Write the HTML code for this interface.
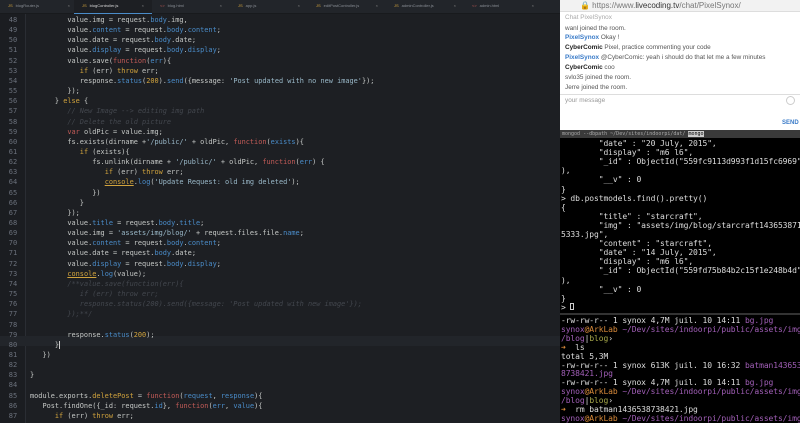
<!DOCTYPE html>
<html><head><meta charset="utf-8"><style>
*{margin:0;padding:0;box-sizing:border-box}
body{width:800px;height:423px;overflow:hidden;background:#1d1f23;position:relative;font-family:"DejaVu Sans Mono","Liberation Mono",monospace}
#tabs{position:absolute;left:0;top:0;width:560px;height:14px;background:#22252a;border-bottom:1px solid #181a1d;z-index:2}
.tab{position:absolute;top:0;height:14px;width:78px;font:4px "Liberation Sans",sans-serif;color:#8a8f96;line-height:12px;padding-left:8px}
.tab i{font-style:normal;color:#d1a33d;margin-right:3px}
.tab b{position:absolute;right:8px;top:0;color:#888;font-weight:normal}
#ed{position:absolute;left:0;top:14px;width:560px;height:409px;background:#1d1f23;overflow:hidden}
#gut{position:absolute;left:0;top:0;width:26px;height:409px;background:#1b1d21;border-right:1px solid #2a2d33}
.ln{position:absolute;left:0;width:26px;text-align:center;font-size:7px;color:#6b717c}
.cl{position:absolute;left:30px;font-size:6.9px;color:#c5c8c6;white-space:pre}
.p{color:#4a8cc9}.f{color:#c25b57}.k{color:#d1a33d}.s{color:#9ab9c9}.c{color:#43474e;font-style:italic}.n{color:#d1a33d}.u{text-decoration:underline;color:#d1a33d}
#br{position:absolute;left:560px;top:0;width:240px;height:130px;background:#fff;font-family:"Liberation Sans",sans-serif}
#addr{height:12px;background:#f2f2f2;border-bottom:1px solid #ddd;font-size:8px;color:#777;padding-left:20px;line-height:11px}
#br .m{position:absolute;left:5px;font-size:6.4px;color:#555;white-space:nowrap}
.bl{color:#3a7bc8;font-weight:bold}.bk{color:#222;font-weight:bold}
#tt{position:absolute;left:560px;top:130px;width:240px;height:8px;background:#3a3a3a;font-size:5px;color:#aaa;line-height:8px;padding-left:2px}
#t1{position:absolute;left:560px;top:138px;width:240px;height:175px;background:#000;overflow:hidden}
#t2{position:absolute;left:560px;top:313px;width:240px;height:110px;background:#000;border-top:2px solid #333;overflow:hidden}
.tl{position:absolute;left:1px;font-size:8px;color:#ddd;white-space:pre;letter-spacing:-0.1px}
.mg{color:#a25fb8}.or{color:#d88a3a}.ol{color:#a7a84a}
</style></head><body>
<div id="tabs">
<div class="tab" style="left:0"><i>JS</i>blogRouter.js<b>×</b></div>
<div class="tab" style="left:74px;background:#1d1f23;color:#ddd;border-bottom:1px solid #4a8cc9"><i>JS</i>blogController.js<b>×</b></div>
<div class="tab" style="left:152px"><i style="color:#c25b57">&lt;&gt;</i>blog.html<b>×</b></div>
<div class="tab" style="left:230px"><i>JS</i>app.js<b>×</b></div>
<div class="tab" style="left:308px"><i>JS</i>editPostController.js<b>×</b></div>
<div class="tab" style="left:386px"><i>JS</i>adminController.js<b>×</b></div>
<div class="tab" style="left:464px"><i style="color:#c25b57">&lt;&gt;</i>admin.html<b>×</b></div>
</div>
<div id="ed">
<div id="gut"></div>
<div style="position:absolute;left:0;top:322px;width:560px;height:10px;background:#22252a"></div>
<div id="code"></div>
</div>
<div id="br">
<div id="addr">🔒 https://www.<b style="color:#333;font-weight:normal">livecoding.tv</b>/chat/PixelSynox/</div>
<div class="m" style="top:14px;color:#aaa">Chat PixelSynox</div>
<div class="m" style="top:25px">wanl joined the room.</div>
<div class="m" style="top:34px"><span class="bl">PixelSynox</span> Okay !</div>
<div class="m" style="top:44px"><span class="bk">CyberComic</span> Pixel, practice commenting your code</div>
<div class="m" style="top:54px"><span class="bl">PixelSynox</span> @CyberComic: yeah i should do that let me a few minutes</div>
<div class="m" style="top:64px"><span class="bk">CyberComic</span> coo</div>
<div class="m" style="top:74px">svlo35 joined the room.</div>
<div class="m" style="top:84px">Jerre joined the room.</div>
<div style="position:absolute;left:0;top:94px;width:240px;border-top:1px solid #ddd"></div>
<div class="m" style="top:97px;color:#999">your message</div>
<div style="position:absolute;left:226px;top:96px;width:9px;height:9px;border:1px solid #ccc;border-radius:50%"></div>
<div class="m" style="left:222px;top:120px;color:#3a7bc8;font-weight:bold;font-size:6px">SEND</div>
</div>
<div id="tt">mongod --dbpath ~/Dev/sites/indoorpi/dat/ <span style="background:#ccc;color:#000">mongo</span></div>
<div id="t1"></div>
<div id="t2"></div>
<script>
const L=[
[48,'         value.img = request.<span class="p">body</span>.img,'],
[49,'         value.<span class="p">content</span> = request.<span class="p">body</span>.<span class="p">content</span>;'],
[50,'         value.date = request.<span class="p">body</span>.date;'],
[51,'         value.<span class="p">display</span> = request.<span class="p">body</span>.<span class="p">display</span>;'],
[52,'         value.save(<span class="f">function</span>(<span class="p">err</span>){'],
[53,'            <span class="k">if</span> (err) <span class="k">throw</span> err;'],
[54,'            response.<span class="p">status</span>(<span class="n">200</span>).<span class="p">send</span>({message: <span class="s">\'Post updated with no new image\'</span>});'],
[55,'         });'],
[56,'      } <span class="k">else</span> {'],
[57,'         <span class="c">// New Image --> editing img path</span>'],
[58,'         <span class="c">// Delete the old picture</span>'],
[59,'         <span class="f">var</span> oldPic = value.img;'],
[60,'         fs.exists(dirname +<span class="s">\'/public/\'</span> + oldPic, <span class="f">function</span>(<span class="p">exists</span>){'],
[61,'            <span class="k">if</span> (exists){'],
[62,'               fs.unlink(dirname + <span class="s">\'/public/\'</span> + oldPic, <span class="f">function</span>(<span class="p">err</span>) {'],
[63,'                  <span class="k">if</span> (err) <span class="k">throw</span> err;'],
[64,'                  <span class="u">console</span>.<span class="p">log</span>(<span class="s">\'Update Request: old img deleted\'</span>);'],
[65,'               })'],
[66,'            }'],
[67,'         });'],
[68,'         value.<span class="p">title</span> = request.<span class="p">body</span>.<span class="p">title</span>;'],
[69,'         value.img = <span class="s">\'assets/img/blog/\'</span> + request.files.file.<span class="p">name</span>;'],
[70,'         value.<span class="p">content</span> = request.<span class="p">body</span>.<span class="p">content</span>;'],
[71,'         value.date = request.<span class="p">body</span>.date;'],
[72,'         value.<span class="p">display</span> = request.<span class="p">body</span>.<span class="p">display</span>;'],
[73,'         <span class="u">console</span>.<span class="p">log</span>(value);'],
[74,'         <span class="c">/**value.save(function(err){</span>'],
[75,'            <span class="c">if (err) throw err;</span>'],
[76,'            <span class="c">response.status(200).send({message: \'Post updated with new image\'});</span>'],
[77,'         <span class="c">});**/</span>'],
[78,''],
[79,'         response.<span class="p">status</span>(<span class="n">200</span>);'],
[80,'      }<span style="border-left:1px solid #ccc"></span>'],
[81,'   })'],
[82,''],
[83,'}'],
[84,''],
[85,'module.exports.<span class="k">deletePost</span> = <span class="f">function</span>(<span class="p">request</span>, <span class="p">response</span>){'],
[86,'   Post.findOne({_id: request.<span class="p">id</span>}, <span class="f">function</span>(<span class="p">err</span>, <span class="p">value</span>){'],
[87,'      <span class="k">if</span> (err) <span class="k">throw</span> err;']];
let h='';
L.forEach((l,i)=>{const t=2+i*10.15;h+=`<div class="ln" style="top:${t}px">${l[0]}</div><div class="cl" style="top:${t}px">${l[1]}</div>`});
h+='<div class="cl" style="top:-8px;color:#777">         value.title = request.body.title;</div>';
document.getElementById('code').innerHTML=h;
const T1=['        "date" : "20 July, 2015",','        "display" : "m6 l6",','        "_id" : ObjectId("559fc9113d993f1d15fc6969"','),','        "__v" : 0','}','> db.postmodels.find().pretty()','{','        "title" : "starcraft",','        "img" : "assets/img/blog/starcraft143653871','5333.jpg",','        "content" : "starcraft",','        "date" : "14 July, 2015",','        "display" : "m6 l6",','        "_id" : ObjectId("559fd75b84b2c15f1e248b4d"','),','        "__v" : 0','}','> <span style="border:1px solid #ccc;display:inline-block;width:4px;height:7px"></span>'];
let s='';T1.forEach((l,i)=>{s+=`<div class="tl" style="top:${1+i*9.1}px">${l}</div>`});
document.getElementById('t1').innerHTML=s;
const P='<span class="mg">synox</span><span class="or">@ArkLab</span> <span class="mg">~/Dev/sites/indoorpi/public/assets/img</span>';
const T2=['-rw-rw-r-- 1 synox 4,7M juil. 10 14:11 <span class="mg">bg.jpg</span>',P,'<span class="mg">/blog</span>|<span class="ol">blog</span>›','<span class="or">➜</span>  ls','total 5,3M','-rw-rw-r-- 1 synox 613K juil. 10 16:32 <span class="mg">batman143653</span>','<span class="mg">8738421.jpg</span>','-rw-rw-r-- 1 synox 4,7M juil. 10 14:11 <span class="mg">bg.jpg</span>',P,'<span class="mg">/blog</span>|<span class="ol">blog</span>›','<span class="or">➜</span>  rm batman1436538738421.jpg',P];
s='';T2.forEach((l,i)=>{s+=`<div class="tl" style="top:${1+i*8.9}px">${l}</div>`});
document.getElementById('t2').innerHTML=s;
</script>
</body></html>
